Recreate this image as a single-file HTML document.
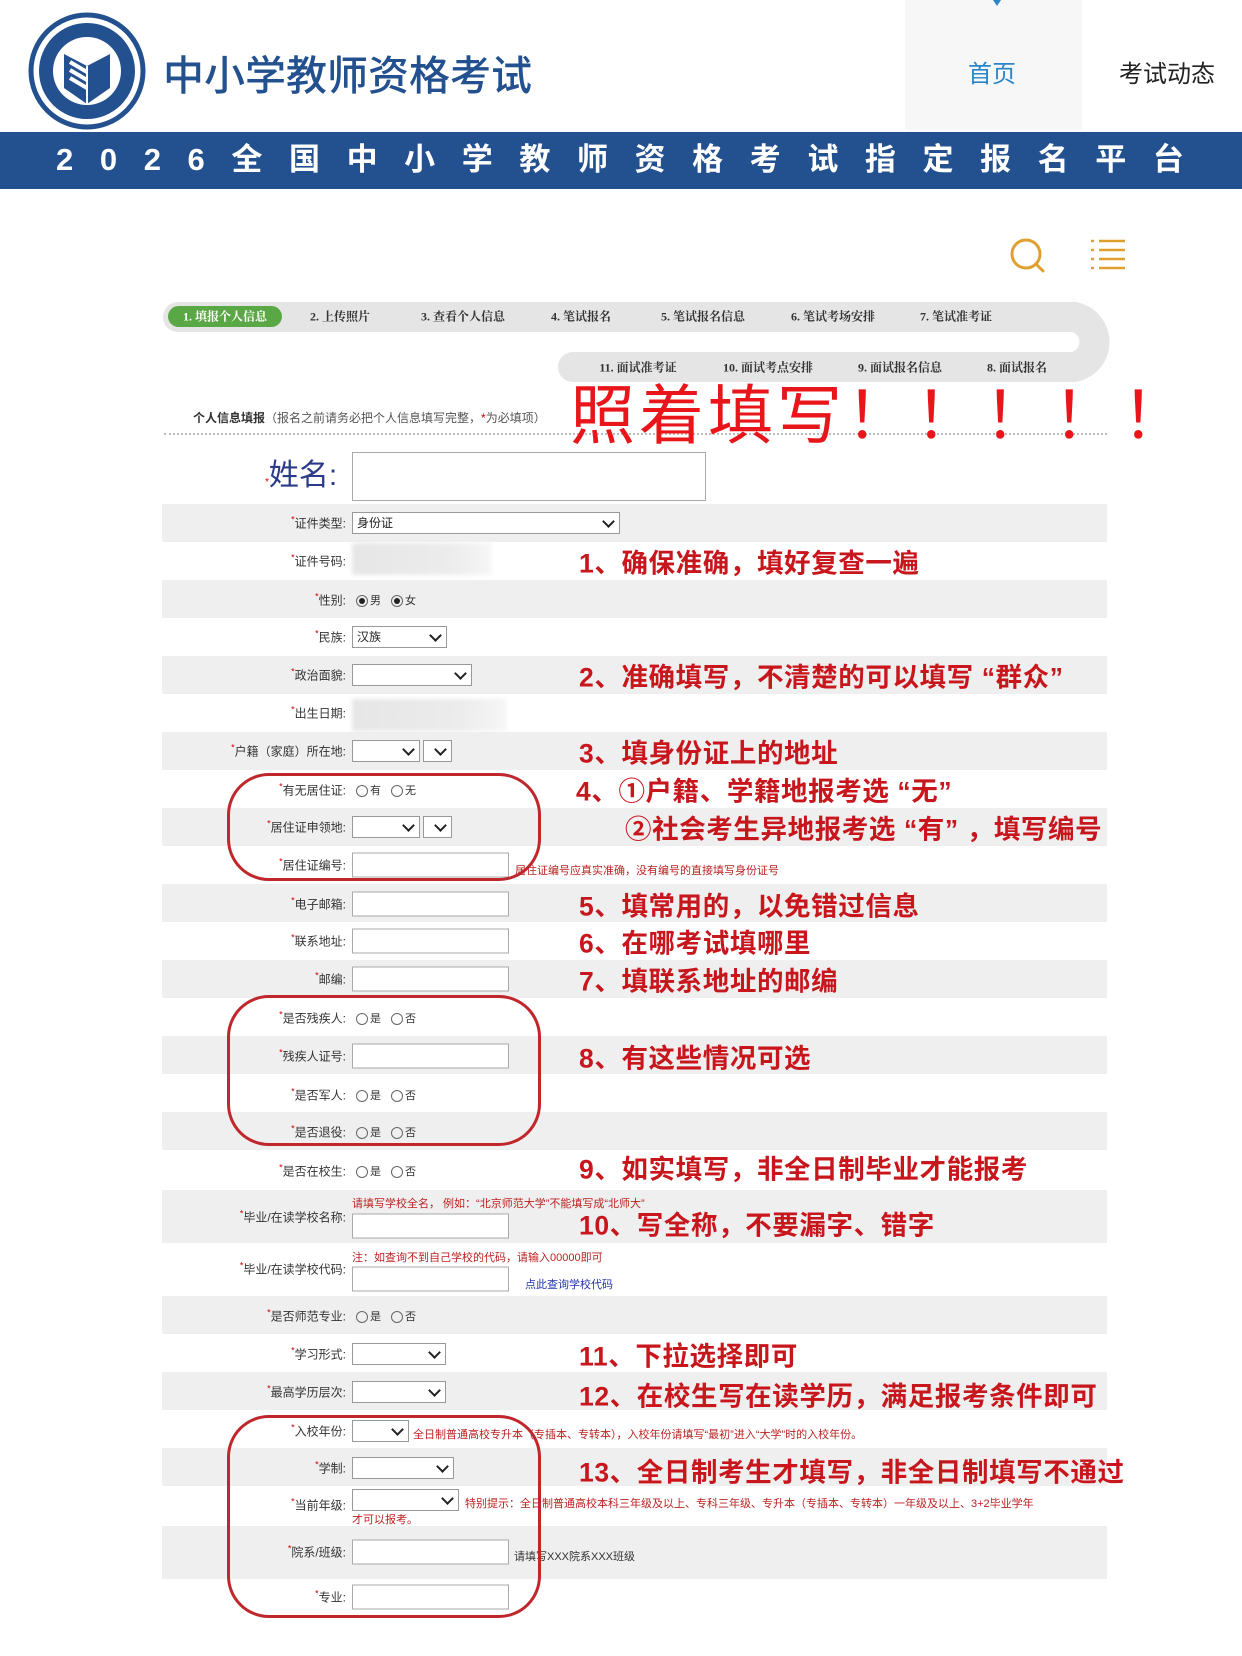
<!DOCTYPE html>
<html><head><meta charset="utf-8">
<style>
*{margin:0;padding:0;box-sizing:border-box}
body{width:1242px;height:1656px;background:#fff;position:relative;overflow:hidden;font-family:"Liberation Sans","Noto Sans CJK SC",sans-serif}
.a{position:absolute}
.band{position:absolute;left:162px;width:945px;background:#efefef}
.lab{position:absolute;right:896px;font-size:12px;color:#333;white-space:nowrap;transform:translateY(-50%)}
.lab:before{content:"*";color:#c00;font-size:9px;vertical-align:top}
.inp{position:absolute;left:352px;width:157px;height:25px;border:1px solid #aaa;background:#fff;transform:translateY(-50%)}
.sel{position:absolute;left:352px;height:22px;border:1px solid #999;background:#fff;transform:translateY(-50%);font-size:12px;line-height:20px;padding-left:4px;color:#222}
.sel:after{content:"";position:absolute;right:6px;top:4px;width:7px;height:7px;border-right:2px solid #222;border-bottom:2px solid #222;transform:rotate(45deg)}
.rad{position:absolute;left:356px;font-size:11px;color:#333;transform:translateY(-50%);white-space:nowrap}
.rad i{display:inline-block;width:12px;height:12px;border:1px solid #666;border-radius:50%;vertical-align:middle;margin-right:2px;position:relative}
.rad i.on:after{content:"";position:absolute;left:2px;top:2px;width:6px;height:6px;border-radius:50%;background:#222}
.rad span{margin-right:10px}
.ann{position:absolute;left:579px;font-size:26.5px;font-weight:bold;color:#c8161d;white-space:nowrap;transform:translateY(-50%);letter-spacing:0.6px}
.note{position:absolute;font-size:11px;color:#b22;white-space:nowrap}
.oval{position:absolute;left:227px;width:314px;border:3px solid #c0272d;border-radius:42px}
.blur{position:absolute;left:352px;height:32px;background:linear-gradient(90deg,#e6e6e6,#ececec 70%,#f6f6f6);filter:blur(2px);transform:translateY(-50%)}
.st{position:absolute;font-size:12px;font-weight:bold;color:#333;font-family:"Liberation Serif","Noto Serif CJK SC",serif;white-space:nowrap;transform:translate(-50%,-50%)}
</style></head><body>

<svg class="a" style="left:28px;top:12px" width="118" height="118" viewBox="0 0 118 118">
<circle cx="59" cy="59" r="56" fill="#fff" stroke="#23508e" stroke-width="5"/>
<circle cx="59" cy="59" r="48" fill="#23508e"/>
<circle cx="59" cy="59" r="34" fill="#fff"/>
<path d="M36 42 L59 54 L82 42 L82 76 L59 92 L36 76 Z" fill="#23508e"/>
<path d="M42 50 L59 60 M42 58 L59 68 M42 66 L59 76" stroke="#fff" stroke-width="4"/>
<path d="M59 54 L59 92" stroke="#fff" stroke-width="2"/>
</svg>
<div class="a" style="left:163px;top:50px;font-size:41px;color:#23508e;line-height:52px;font-weight:500">中小学教师资格考试</div>
<div class="a" style="left:905px;top:0;width:177px;height:130px;background:#f7f7f7"></div>
<div class="a" style="left:993px;top:0;width:0;height:0;border-left:4px solid transparent;border-right:4px solid transparent;border-top:6px solid #2a86c8"></div>
<div class="a" style="left:968px;top:54px;font-size:24px;color:#2a86c8">首页</div>
<div class="a" style="left:1119px;top:54px;font-size:24px;color:#222">考试动态</div>

<div class="a" style="left:0;top:132px;width:1242px;height:57px;background:#23508e"></div>
<div class="a" style="left:56px;top:139px;width:1128px;display:flex;justify-content:space-between;font-size:31px;font-weight:bold;color:#fff;line-height:42px">
<span>2</span><span>0</span><span>2</span><span>6</span><span>全</span><span>国</span><span>中</span><span>小</span><span>学</span><span>教</span><span>师</span><span>资</span><span>格</span><span>考</span><span>试</span><span>指</span><span>定</span><span>报</span><span>名</span><span>平</span><span>台</span></div>

<svg class="a" style="left:1008px;top:236px" width="40" height="40" viewBox="0 0 40 40"><circle cx="18" cy="18" r="14" fill="none" stroke="#e0a030" stroke-width="3"/><path d="M28 28 L35 35" stroke="#e0a030" stroke-width="3" stroke-linecap="round"/></svg>
<svg class="a" style="left:1090px;top:238px" width="36" height="34" viewBox="0 0 36 34"><g stroke="#e0a030" stroke-width="2.5"><path d="M1 3h3M9 3h26M1 12h3M9 12h26M1 21h3M9 21h26M1 30h3M9 30h26"/></g></svg>

<svg class="a" style="left:0;top:0" width="1242" height="400"><path d="M178 317 H1074 A25.5 25.5 0 0 1 1074 367 H573" fill="none" stroke="#e5e5e5" stroke-width="30" stroke-linecap="round"/></svg>
<div class="a" style="left:168px;top:306px;width:114px;height:21px;border-radius:11px;background:#5aa845"></div>
<div class="st" style="left:225px;top:316px;color:#fff">1. 填报个人信息</div>
<div class="st" style="left:340px;top:316px">2. 上传照片</div>
<div class="st" style="left:463px;top:316px">3. 查看个人信息</div>
<div class="st" style="left:581px;top:316px">4. 笔试报名</div>
<div class="st" style="left:703px;top:316px">5. 笔试报名信息</div>
<div class="st" style="left:833px;top:316px">6. 笔试考场安排</div>
<div class="st" style="left:956px;top:316px">7. 笔试准考证</div>
<div class="st" style="left:638px;top:367px">11. 面试准考证</div>
<div class="st" style="left:768px;top:367px">10. 面试考点安排</div>
<div class="st" style="left:900px;top:367px">9. 面试报名信息</div>
<div class="st" style="left:1017px;top:367px">8. 面试报名</div>

<div class="a" style="left:193px;top:409px;font-size:12px;color:#333;white-space:nowrap"><b>个人信息填报</b><span style="color:#555">（报名之前请务必把个人信息填写完整，<span style="color:#c00">*</span>为必填项）</span></div>
<div class="a" style="left:164px;top:433px;width:943px;border-top:2px dotted #bbb"></div>
<div class="a" style="left:570px;top:378px;font-size:65px;color:#e8161a;white-space:nowrap;line-height:76px;letter-spacing:4px">照着填写！！！！！</div>

<div class="a" style="left:265px;top:456px;font-size:30px;color:#2c3a8a;line-height:40px"><span style="font-size:10px;color:#c00">*</span>姓名:</div>
<div class="a" style="left:352px;top:452px;width:354px;height:49px;border:1px solid #aaa"></div>

<div class="band" style="top:504px;height:38px"></div>
<div class="band" style="top:580px;height:38px"></div>
<div class="band" style="top:656px;height:38px"></div>
<div class="band" style="top:732px;height:38px"></div>
<div class="band" style="top:808px;height:38px"></div>
<div class="band" style="top:884px;height:38px"></div>
<div class="band" style="top:960px;height:38px"></div>
<div class="band" style="top:1036px;height:38px"></div>
<div class="band" style="top:1112px;height:38px"></div>
<div class="band" style="top:1190px;height:53px"></div>
<div class="band" style="top:1296px;height:38px"></div>
<div class="band" style="top:1372px;height:38px"></div>
<div class="band" style="top:1448px;height:38px"></div>
<div class="band" style="top:1526px;height:53px"></div>

<div class="lab" style="top:523px">证件类型:</div><div class="sel" style="top:523px;width:268px">身份证</div>
<div class="lab" style="top:561px">证件号码:</div><div class="blur" style="top:559px;width:140px"></div>
<div class="lab" style="top:600px">性别:</div><div class="rad" style="top:600px"><i class="on"></i><span>男</span><i class="on"></i><span>女</span></div>
<div class="lab" style="top:637px">民族:</div><div class="sel" style="top:637px;width:95px">汉族</div>
<div class="lab" style="top:675px">政治面貌:</div><div class="sel" style="top:675px;width:120px"></div>
<div class="lab" style="top:713px">出生日期:</div><div class="blur" style="top:715px;width:155px"></div>
<div class="lab" style="top:751px">户籍（家庭）所在地:</div><div class="sel" style="top:751px;width:68px"></div><div class="sel" style="top:751px;left:423px;width:29px"></div>
<div class="lab" style="top:790px">有无居住证:</div><div class="rad" style="top:790px"><i></i><span>有</span><i></i><span>无</span></div>
<div class="lab" style="top:827px">居住证申领地:</div><div class="sel" style="top:827px;width:68px"></div><div class="sel" style="top:827px;left:423px;width:29px"></div>
<div class="lab" style="top:865px">居住证编号:</div><div class="inp" style="top:865px"></div>
<div class="note" style="left:515px;top:862px">居住证编号应真实准确，没有编号的直接填写身份证号</div>
<div class="lab" style="top:904px">电子邮箱:</div><div class="inp" style="top:904px"></div>
<div class="lab" style="top:941px">联系地址:</div><div class="inp" style="top:941px"></div>
<div class="lab" style="top:979px">邮编:</div><div class="inp" style="top:979px"></div>
<div class="lab" style="top:1018px">是否残疾人:</div><div class="rad" style="top:1018px"><i></i><span>是</span><i></i><span>否</span></div>
<div class="lab" style="top:1056px">残疾人证号:</div><div class="inp" style="top:1056px"></div>
<div class="lab" style="top:1095px">是否军人:</div><div class="rad" style="top:1095px"><i></i><span>是</span><i></i><span>否</span></div>
<div class="lab" style="top:1132px">是否退役:</div><div class="rad" style="top:1132px"><i></i><span>是</span><i></i><span>否</span></div>
<div class="lab" style="top:1171px">是否在校生:</div><div class="rad" style="top:1171px"><i></i><span>是</span><i></i><span>否</span></div>
<div class="note" style="left:352px;top:1195px">请填写学校全名， 例如：“北京师范大学”不能填写成“北师大”</div>
<div class="lab" style="top:1217px">毕业/在读学校名称:</div><div class="inp" style="top:1226px"></div>
<div class="note" style="left:352px;top:1249px">注：如查询不到自己学校的代码，请输入00000即可</div>
<div class="lab" style="top:1269px">毕业/在读学校代码:</div><div class="inp" style="top:1279px"></div>
<div class="note" style="left:525px;top:1276px;color:#2233aa">点此查询学校代码</div>
<div class="lab" style="top:1316px">是否师范专业:</div><div class="rad" style="top:1316px"><i></i><span>是</span><i></i><span>否</span></div>
<div class="lab" style="top:1354px">学习形式:</div><div class="sel" style="top:1354px;width:94px"></div>
<div class="lab" style="top:1392px">最高学历层次:</div><div class="sel" style="top:1392px;width:94px"></div>
<div class="lab" style="top:1431px">入校年份:</div><div class="sel" style="top:1431px;width:57px"></div>
<div class="note" style="left:413px;top:1426px">全日制普通高校专升本（专插本、专转本），入校年份请填写“最初”进入“大学”时的入校年份。</div>
<div class="lab" style="top:1468px">学制:</div><div class="sel" style="top:1468px;width:102px"></div>
<div class="lab" style="top:1505px">当前年级:</div><div class="sel" style="top:1500px;width:107px"></div>
<div class="note" style="left:465px;top:1495px">特别提示：全日制普通高校本科三年级及以上、专科三年级、专升本（专插本、专转本）一年级及以上、3+2毕业学年</div>
<div class="note" style="left:352px;top:1511px">才可以报考。</div>
<div class="lab" style="top:1552px">院系/班级:</div><div class="inp" style="top:1552px"></div>
<div class="note" style="left:514px;top:1548px;color:#333">请填写XXX院系XXX班级</div>
<div class="lab" style="top:1597px">专业:</div><div class="inp" style="top:1597px"></div>

<div class="oval" style="top:773px;height:108px"></div>
<div class="oval" style="top:995px;height:151px"></div>
<div class="oval" style="top:1415px;height:203px"></div>

<div class="ann" style="top:561px">1、确保准确，填好复查一遍</div>
<div class="ann" style="top:675px">2、准确填写，不清楚的可以填写 “群众”</div>
<div class="ann" style="top:751px">3、填身份证上的地址</div>
<div class="ann" style="top:789px;left:576px">4、①户籍、学籍地报考选 “无”</div>
<div class="ann" style="top:827px;left:625px">②社会考生异地报考选 “有” ，填写编号</div>
<div class="ann" style="top:904px">5、填常用的，以免错过信息</div>
<div class="ann" style="top:941px">6、在哪考试填哪里</div>
<div class="ann" style="top:979px">7、填联系地址的邮编</div>
<div class="ann" style="top:1056px">8、有这些情况可选</div>
<div class="ann" style="top:1167px">9、如实填写，非全日制毕业才能报考</div>
<div class="ann" style="top:1223px">10、写全称，不要漏字、错字</div>
<div class="ann" style="top:1354px">11、下拉选择即可</div>
<div class="ann" style="top:1394px">12、在校生写在读学历，满足报考条件即可</div>
<div class="ann" style="top:1470px">13、全日制考生才填写，非全日制填写不通过</div>
</body></html>
